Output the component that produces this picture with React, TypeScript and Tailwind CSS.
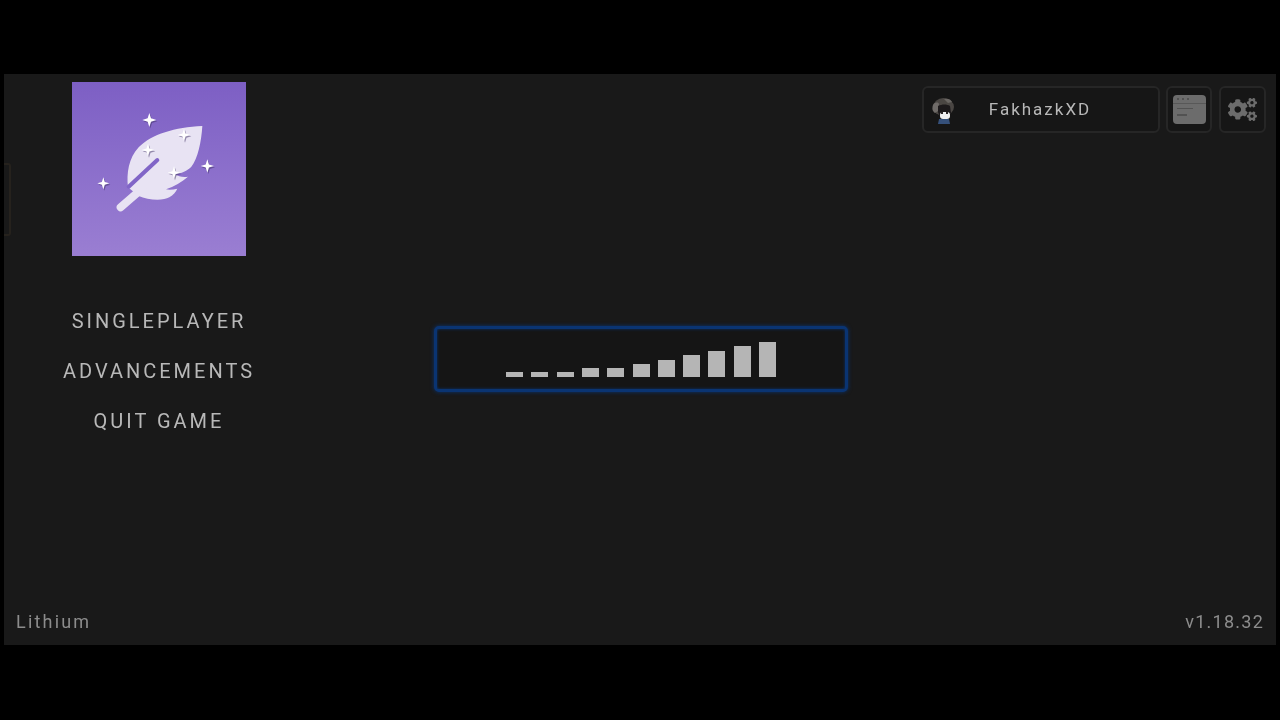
import { FaCogs } from "react-icons/fa";

const menuItems = ["SINGLEPLAYER", "ADVANCEMENTS", "QUIT GAME"];
const barHeights = [5, 5, 5, 9, 9, 13, 17, 22, 26, 31, 35];
const sparkles = [
  [268, 150, 21],
  [372, 195, 19],
  [264, 240, 19],
  [442, 288, 20],
  [342, 308, 19],
  [130, 340, 18],
];

function sparklePath(x: number, y: number, r: number) {
  const k = r * 0.24;
  return `M${x} ${y - r}L${x + k} ${y - k}L${x + r} ${y}L${x + k} ${y + k}L${x} ${y + r}L${x - k} ${y + k}L${x - r} ${y}L${x - k} ${y - k}Z`;
}

function Logo() {
  return (
    <div className="w-[174px] h-[174px] bg-gradient-to-b from-[#7d5fc4] to-[#9a7ed2]">
      <svg className="w-full h-full" viewBox="36 36 522 522">
        {/* feather */}
        <path
          fill="#e8e3f3"
          d="M427 168C345 172 275 192 236 232C206 264 199 310 204 352L236 378C262 390 308 394 328 382C340 375 347 366 352 356C340 359 328 360 318 358C342 350 366 336 384 320C370 323 356 320 344 312C364 311 382 302 394 290C414 265 424 215 427 168Z"
        />
        <path d="M206 350L292 270" stroke="#8165c7" strokeWidth="12" strokeLinecap="round" fill="none" />
        <path d="M182 412L246 356" stroke="#e8e3f3" strokeWidth="24" strokeLinecap="round" fill="none" />
        {/* sparkles */}
        {sparkles.map(([x, y, r]) => (
          <g key={`${x}-${y}`}>
            <path d={sparklePath(x + 3, y + 4, r)} fill="#3d2f63" opacity="0.5" />
            <path d={sparklePath(x, y, r)} fill="#ffffff" />
          </g>
        ))}
      </svg>
    </div>
  );
}

function Avatar() {
  return (
    <svg className="w-[26px] h-[28px]" viewBox="0 0 26 28">
      <path d="M8 22h10l1 5H7z" fill="#35507a" />
      <ellipse cx="12.5" cy="10" rx="10.5" ry="9" fill="#4a4643" />
      <path d="M2 8c2-3 5-3 6-1l-1 7-3 2C1 14 1 11 2 8z" fill="#6f6b68" />
      <path d="M13 2c3-1 7 0 8 3l-4 1z" fill="#6a6663" />
      <path d="M7 9c4-2 9-2 12 0l1 7-2 4c-3 2-7 2-9 0l-2-5z" fill="#1c191b" />
      <rect x="9" y="15" width="10" height="7" rx="3" fill="#f0f0f2" />
      <rect x="10" y="15" width="2" height="2" fill="#2a2628" />
      <rect x="15" y="15" width="2" height="2" fill="#2a2628" />
    </svg>
  );
}

function WindowIcon() {
  return (
    <svg className="w-[33px] h-[29px]" viewBox="0 0 33 29">
      <rect x="0" y="0" width="33" height="29" rx="4" fill="#6c6c6c" />
      <rect x="0" y="8" width="33" height="1" fill="#585858" />
      <rect x="4" y="3" width="2" height="2" fill="#525252" />
      <rect x="9" y="3" width="2" height="2" fill="#525252" />
      <rect x="14" y="3" width="2" height="2" fill="#525252" />
      <rect x="4" y="13" width="16" height="1" fill="#525252" />
      <rect x="4" y="19" width="10" height="2" fill="#525252" />
    </svg>
  );
}

export default function App() {
  return (
    <div className="w-[1280px] h-[720px] bg-black pt-[74px] px-[4px] overflow-hidden font-['Roboto',sans-serif]">
      <div className="relative h-[571px] bg-[#191919] grid grid-cols-[430px_414px_1fr] blur-[0.5px]">
        {/* dim edge handle */}
        <div className="absolute left-0 top-[89px] w-[7px] h-[73px] rounded-r-[3px] border-r-2 border-y-2 border-[#26221d]" />

        {/* Left column */}
        <div className="flex flex-col pl-[12px] pt-[8px] pb-[13px]">
          <div className="ml-[56px] w-[174px]">
            <Logo />
            <div className="mt-[53px] flex flex-col items-center gap-[26px]">
              {menuItems.map((item) => (
                <div
                  key={item}
                  className="h-[24px] leading-[24px] whitespace-nowrap text-[20px] tracking-[3px] text-[#b8b8b8]"
                >
                  {item}
                </div>
              ))}
            </div>
          </div>
          <div className="mt-auto text-[18px] leading-[21px] tracking-[2.2px] text-[#8c8c8c]">Lithium</div>
        </div>

        {/* Loading box */}
        <div className="self-center mb-[2px] h-[66px] rounded-[5px] border-[3px] border-[#0a3472] bg-[#151515] shadow-[0_0_4px_#0a3472,inset_0_0_3px_#0a3472] flex items-end justify-center gap-[8.3px] pb-[12px]">
          {barHeights.map((h, i) => (
            <div key={i} className="w-[17px] bg-[#b5b5b5]" style={{ height: h }} />
          ))}
        </div>

        {/* Right column */}
        <div className="flex flex-col items-end pr-[10px] pt-[12px] pb-[13px]">
          <div className="flex gap-[6px]">
            <div className="relative w-[238px] h-[47px] pr-[2px] rounded-[6px] border-2 border-[#262626] bg-[#161616] flex items-center justify-center text-[17px] tracking-[2px] text-[#b8b8b8]">
              <div className="absolute left-[7px] top-[9px]">
                <Avatar />
              </div>
              FakhazkXD
            </div>
            <div className="w-[46px] h-[47px] rounded-[6px] border-2 border-[#262626] bg-[#161616] flex items-center justify-center">
              <WindowIcon />
            </div>
            <div className="ml-[1px] w-[47px] h-[47px] rounded-[6px] border-2 border-[#262626] bg-[#161616] flex items-center justify-center">
              <FaCogs className="w-[29px] h-[29px] text-[#6c6c6c]" />
            </div>
          </div>
          <div className="mt-auto mr-[2px] text-[18px] leading-[21px] tracking-[1.25px] text-[#8c8c8c]">v1.18.32</div>
        </div>
      </div>
    </div>
  );
}
